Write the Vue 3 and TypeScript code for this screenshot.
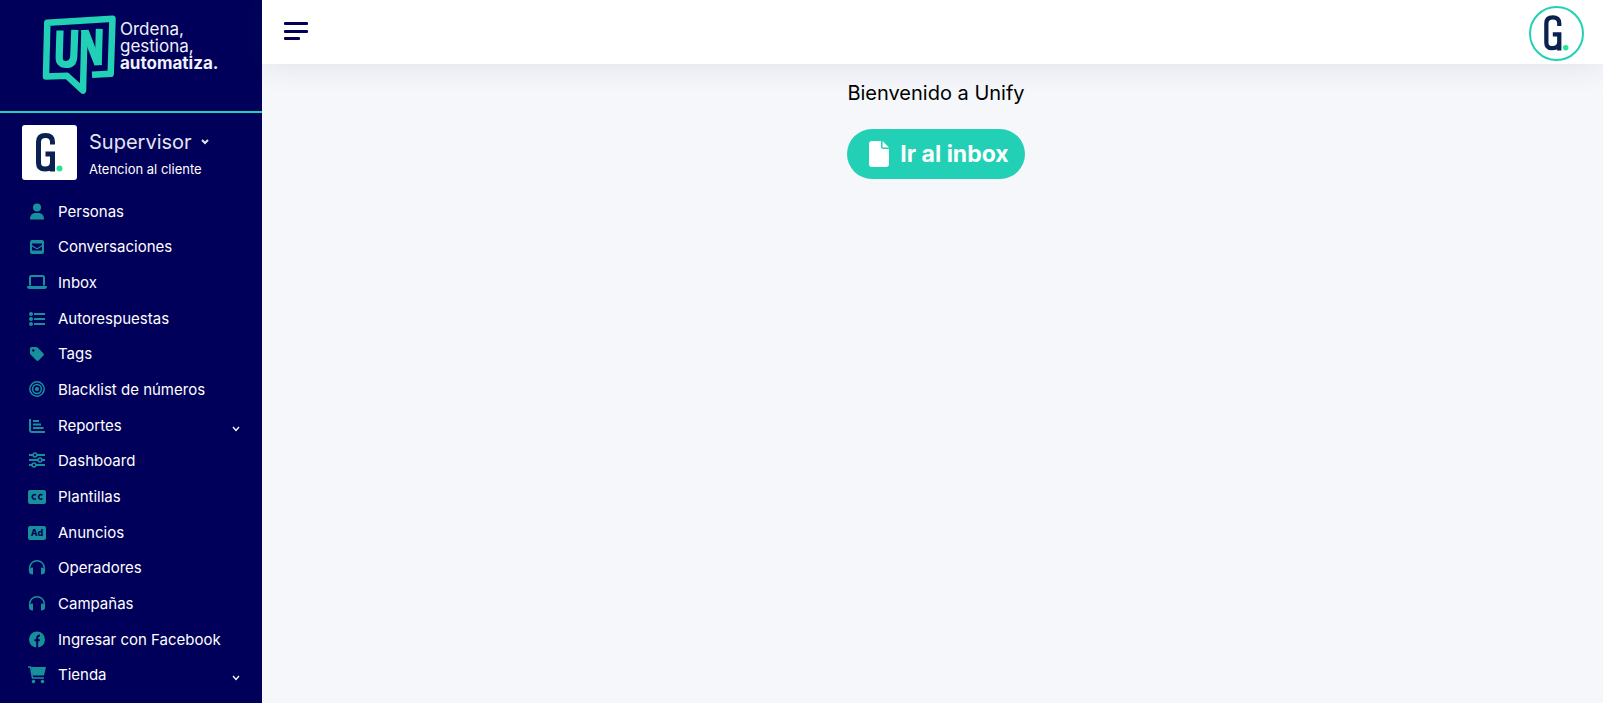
<script setup lang="ts">
import { ref } from 'vue'

interface MenuItem {
  label: string
  icon: string
  expandable?: boolean
}

const items: MenuItem[] = [
  { label: 'Personas', icon: 'user' },
  { label: 'Conversaciones', icon: 'mail' },
  { label: 'Inbox', icon: 'laptop' },
  { label: 'Autorespuestas', icon: 'list' },
  { label: 'Tags', icon: 'tag' },
  { label: 'Blacklist de números', icon: 'target' },
  { label: 'Reportes', icon: 'chart', expandable: true },
  { label: 'Dashboard', icon: 'sliders' },
  { label: 'Plantillas', icon: 'cc' },
  { label: 'Anuncios', icon: 'ad' },
  { label: 'Operadores', icon: 'headphones' },
  { label: 'Campañas', icon: 'headphones' },
  { label: 'Ingresar con Facebook', icon: 'facebook' },
  { label: 'Tienda', icon: 'cart', expandable: true },
]

const open = ref(true)
</script>

<template>
  <div class="layout">
    <aside v-show="open" class="sidebar">
      <a class="brand" href="#">
        <svg class="brand-mark" width="76" height="82" viewBox="0 0 76 82" aria-hidden="true">
          <g fill="none" stroke="#22d1b5" stroke-linejoin="round">
            <path stroke-width="6.500" d="M50 60.800 L68.700 59.800 L70.500 4.800 L5.300 8.700 L4 62.500 L25 61.800 L41 76.500 L42.500 16" />
            <path stroke-width="7.200" d="M18 16.500 L17.200 43 Q17 50.500 24 50.500 Q31.500 50.500 31.800 42 L32.800 15.800" />
            <path stroke-width="7" d="M57.300 14.800 L56.300 51" />
          </g>
          <path d="M39 16.200 L46.500 15.800 L60 51 L52.500 51.400 L44 30 Z" fill="#22d1b5" />
        </svg>
        <span class="slogan">Ordena,<br />gestiona,<br /><strong>automatiza.</strong></span>
      </a>

      <div class="profile">
        <span class="avatar">
          <svg width="27" height="39" viewBox="0 0 27 39" aria-hidden="true">
            <path d="M16.500 11.500 V9 Q16.500 2.500 9.500 2.500 Q2.500 2.500 2.500 9 V30 Q2.500 36 9 36 Q16.500 36 16.500 29 V21 H9.500 M16.500 29 V38.500" fill="none" stroke="#0b2150" stroke-width="5" />
            <circle cx="23.500" cy="35.500" r="3" fill="#21e69a" />
          </svg>
        </span>
        <div class="who">
          <button class="role" type="button">
            Supervisor
            <svg width="8" height="6" viewBox="0 0 8 6" aria-hidden="true"><path d="M1 1 L4 4 L7 1" fill="none" stroke="currentColor" stroke-width="2" /></svg>
          </button>
          <span class="team">Atencion al cliente</span>
        </div>
      </div>

      <nav class="menu" aria-label="Menú principal">
        <a v-for="item in items" :key="item.label" class="item" href="#">
          <svg class="icon" width="20" height="18" viewBox="0 0 20 18" aria-hidden="true">
            <template v-if="item.icon === 'user'">
              <circle cx="10" cy="4.500" r="4" />
              <path d="M3 16.500 C3 12 5.500 10 8.500 10 H11.500 C14.500 10 17 12 17 16.500 Z" />
            </template>
            <template v-else-if="item.icon === 'mail'">
              <path fill-rule="evenodd" d="M5 2 H15 Q17 2 17 4 V14 Q17 16 15 16 H5 Q3 16 3 14 V4 Q3 2 5 2 Z M5 5.500 V7 L10 10.300 L15 7 V5.500 Z M5 8.500 V12.500 H15 V8.500 L10 11.500 Z" />
            </template>
            <template v-else-if="item.icon === 'laptop'">
              <path d="M3 11.500 V3.500 Q3 2 4.500 2 H15.500 Q17 2 17 3.500 V11.500" class="line" />
              <path d="M0 12 H20 Q20 15 17.500 15 H2.500 Q0 15 0 12 Z" />
            </template>
            <template v-else-if="item.icon === 'list'">
              <circle cx="4" cy="4" r="2" /><circle cx="4" cy="9" r="2" /><circle cx="4" cy="14" r="2" />
              <path d="M7 4 H18 M7 9 H18 M7 14 H18" class="line" />
            </template>
            <template v-else-if="item.icon === 'tag'">
              <path fill-rule="evenodd" d="M3 3.500 Q3 2 4.500 2 H9.200 Q10 2 10.600 2.600 L16.500 8.500 Q17.300 9.500 16.500 10.500 L11.500 15.500 Q10.500 16.300 9.500 15.500 L3.600 9.600 Q3 9 3 8.200 Z M6.300 4.300 A1.200 1.200 0 1 0 6.310 4.300 Z" />
            </template>
            <template v-else-if="item.icon === 'target'">
              <g class="thin"><circle cx="10" cy="8" r="7.200" /><circle cx="10" cy="8" r="4.400" /></g>
              <circle cx="10" cy="8" r="2" />
            </template>
            <template v-else-if="item.icon === 'chart'">
              <path d="M3 2 V13 Q3 15 5 15 H18 M6 4 H12 M6 7.500 H14 M6 11 H16.500" class="line" />
            </template>
            <template v-else-if="item.icon === 'sliders'">
              <path d="M2 3 H6 M10 3 H18 M2 8 H11 M15 8 H18 M2 13 H5 M9 13 H18" class="line" />
              <g class="thin"><circle cx="8" cy="3" r="1.900" /><circle cx="13" cy="8" r="1.900" /><circle cx="7" cy="13" r="1.900" /></g>
            </template>
            <template v-else-if="item.icon === 'cc'">
              <rect x="1" y="2" width="18" height="14" rx="2" />
              <path class="cut" d="M9 7.300 A2.200 2.200 0 1 0 9 10.500 M15.400 7.300 A2.200 2.200 0 1 0 15.400 10.500" />
            </template>
            <template v-else-if="item.icon === 'ad'">
              <rect x="1" y="2" width="18" height="14" rx="2" />
              <text class="badge-text" x="10" y="12" text-anchor="middle">Ad</text>
            </template>
            <template v-else-if="item.icon === 'headphones'">
              <path d="M2.700 12 V9 A7.300 7.300 0 0 1 17.300 9 V12" class="thin" />
              <path d="M6 8.500 V15.500 Q2 15.500 2 12.500 Q2 8.500 6 8.500 Z M14 8.500 V15.500 Q18 15.500 18 12.500 Q18 8.500 14 8.500 Z" />
            </template>
            <template v-else-if="item.icon === 'facebook'">
              <circle cx="10" cy="8.500" r="8" />
              <path d="M10.200 17 V7 Q10.200 4.500 13 4.500 M7.500 9.300 H12.800" class="cut wide" />
            </template>
            <template v-else>
              <path d="M1 1 H3.500 L5.500 12 H17" class="thin" />
              <path d="M4 1 H19 L17 9.500 H5.500 Z" />
              <circle cx="6.500" cy="15.500" r="1.800" /><circle cx="15.500" cy="15.500" r="1.800" />
            </template>
          </svg>
          <span>{{ item.label }}</span>
          <svg v-if="item.expandable" class="caret" width="8" height="6" viewBox="0 0 8 6" aria-hidden="true"><path d="M1 1 L4 4.500 L7 1" fill="none" stroke="currentColor" stroke-width="1.300" /></svg>
        </a>
      </nav>
    </aside>

    <div class="page">
      <header class="topbar">
        <button class="toggle" type="button" aria-label="Mostrar u ocultar menú" @click="open = !open">
          <svg width="24" height="18" viewBox="0 0 24 18" aria-hidden="true">
            <rect width="24" height="3" rx="1" /><rect y="8" width="24" height="3" rx="1" /><rect y="15" width="16" height="3" rx="1" />
          </svg>
        </button>
        <button class="account" type="button" aria-label="Cuenta">
          <svg width="25" height="36" viewBox="0 0 27 39" aria-hidden="true">
            <path d="M16.500 12 V9 Q16.500 2.500 9.500 2.500 Q2.500 2.500 2.500 9 V30 Q2.500 36 9 36 Q16.500 36 16.500 29 V21 H9.500 M16.500 29 V38.500" fill="none" stroke="#0b2150" stroke-width="4.600" />
            <circle cx="23.500" cy="35.500" r="3" fill="#21e69a" />
          </svg>
        </button>
      </header>
      <main class="content">
        <h1>Bienvenido a Unify</h1>
        <a class="cta" href="#">
          <svg width="20" height="26" viewBox="0 0 20 26" aria-hidden="true">
            <path d="M3 0 H12 V6 Q12 8 14 8 H20 V23 Q20 26 17 26 H3 Q0 26 0 23 V3 Q0 0 3 0 Z M13.500 0 L20 6.500 H13.500 Z" fill="currentColor" />
          </svg>
          Ir al inbox
        </a>
      </main>
    </div>
  </div>
</template>

<style>
body {
  margin: 0;
}
</style>

<style scoped>
.layout {
  display: flex;
  min-height: 100vh;
  background: #f5f7fb;
  font-family: Inter, 'Liberation Sans', sans-serif;
  color: #000;
}
.sidebar {
  display: flex;
  flex-direction: column;
  flex: 0 0 262px;
  box-sizing: border-box;
  padding-bottom: 10px;
  background: #00005a;
  color: #fff;
}
a {
  color: inherit;
  text-decoration: none;
}
button {
  padding: 0;
  border: 0;
  background: none;
  font: inherit;
  color: inherit;
  cursor: pointer;
}
.brand {
  display: flex;
  gap: 2px;
  padding: 14px 0 15px 42px;
  border-bottom: 2px solid #22d1b5;
}
.slogan {
  padding-top: 7px;
  font-size: 17px;
  line-height: 17px;
  color: #f0f0f8;
}
.profile {
  display: flex;
  gap: 12px;
  padding: 12px 22px 14px;
}
.avatar {
  display: grid;
  place-items: center;
  width: 55px;
  height: 55px;
  border-radius: 3px;
  background: #fff;
}
.who {
  display: flex;
  flex-direction: column;
  gap: 5px;
  padding-top: 3px;
}
.role {
  display: flex;
  align-items: center;
  gap: 9px;
  font-size: 20px;
  line-height: 28px;
  color: #e4e6f0;
}
.team {
  font-size: 13px;
  line-height: 16px;
}
.menu {
  flex: 1;
  display: grid;
  grid-auto-rows: minmax(32px, 1fr);
}
.item {
  display: flex;
  align-items: center;
  gap: 11px;
  padding: 0 22px 0 27px;
  font-size: 15px;
  line-height: 20px;
}
.icon {
  fill: #17909b;
}
.line,
.thin {
  fill: none;
  stroke: #17909b;
  stroke-width: 2;
}
.thin {
  stroke-width: 1.5;
}
.cut {
  fill: none;
  stroke: #00005a;
  stroke-width: 1.5;
}
.wide {
  stroke-width: 2;
}
.badge-text {
  font-size: 9px;
  font-weight: 800;
  fill: #00005a;
}
.caret {
  margin: 6px 0 0 auto;
}
.page {
  flex: 1;
  min-width: 0;
}
.topbar {
  display: flex;
  align-items: center;
  justify-content: space-between;
  box-sizing: border-box;
  height: 64px;
  padding: 2px 19px 0 22px;
  background: #fff;
  box-shadow: 0 0 32px rgba(40, 50, 70, 0.12);
}
.toggle {
  display: flex;
  padding-bottom: 4px;
  fill: #00005a;
}
.account {
  display: grid;
  place-items: center;
  width: 55px;
  height: 55px;
  border: 2px solid #22d1b5;
  border-radius: 50%;
}
.content {
  display: flex;
  flex-direction: column;
  align-items: center;
  gap: 21px;
  padding: 15px 0 15px 7px;
}
h1 {
  margin: 0;
  font-size: 20px;
  line-height: 29px;
  font-weight: 400;
}
.cta {
  display: flex;
  align-items: center;
  gap: 11px;
  padding: 10px 16px 10px 22px;
  border-radius: 25px;
  background: #22d1b5;
  color: #fff;
  font-size: 23px;
  line-height: 30px;
  font-weight: 700;
}
</style>
